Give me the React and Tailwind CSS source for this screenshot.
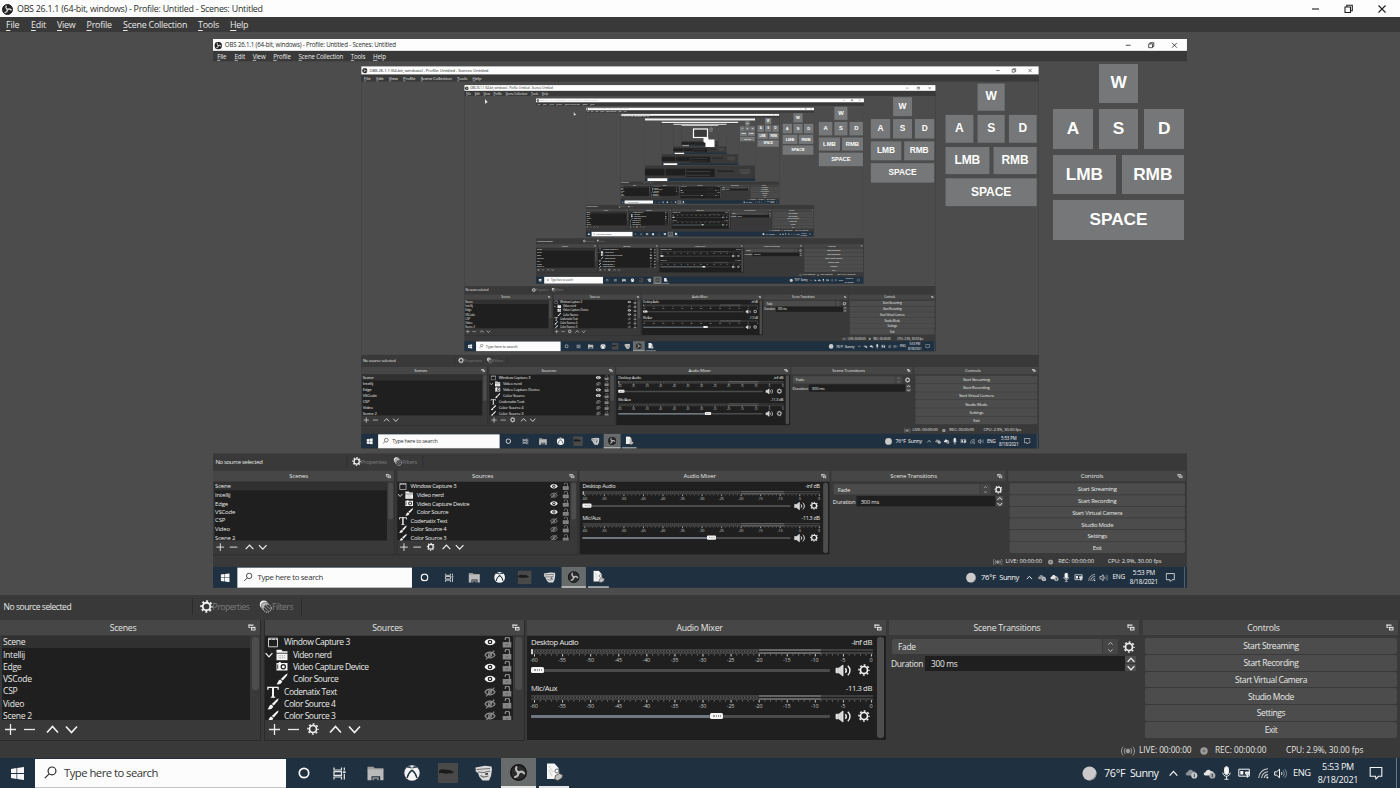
import React from "react";

const SCALE_X = 0.6957;
const SCALE_Y = 0.6965;
const DETAIL_DEPTH = 7;
const MAX_DEPTH = 10;

/* ---------- icons ---------- */

const Gear = ({ size = 12, className = "" }) => (
  <svg width={size} height={size} viewBox="0 0 12 12" className={"shrink-0 " + className} fill="none" stroke="#f2f3f2">
    <circle cx="6" cy="6" r="3.5" strokeWidth="1.7" />
    <circle cx="6" cy="6" r="5" strokeWidth="1.5" strokeDasharray="1.9 2.027" strokeDashoffset="0.95" />
  </svg>
);

const ObsLogo = ({ size = 11, ring = "#222322", blade = "#d8d8d8", bg = "#222322" }) => (
  <svg width={size} height={size} viewBox="0 0 24 24" className="shrink-0">
    <circle cx="12" cy="12" r="11" fill={bg} stroke={ring} strokeWidth="2" />
    <g fill="none" stroke={blade} strokeWidth="3" strokeLinecap="round">
      <path d="M9 4.5c-1.500 4 .5 6.500 3.800 6.800" />
      <path d="M9 4.5c-1.500 4 .5 6.500 3.800 6.800" transform="rotate(120 12 12)" />
      <path d="M9 4.5c-1.500 4 .5 6.500 3.800 6.800" transform="rotate(240 12 12)" />
    </g>
  </svg>
);

const Plus = () => (
  <svg width="13" height="13" viewBox="0 0 13 13" stroke="#e9eae9" strokeWidth="1.3"><path d="M6.500 1v11M1 6.500h11" /></svg>
);
const Minus = () => (
  <svg width="13" height="13" viewBox="0 0 13 13" stroke="#e9eae9" strokeWidth="1.3"><path d="M1 6.500h11" /></svg>
);
const Up = ({ w = 13, color = "#f2f3f2", sw = 1.6 }) => (
  <svg width={w} height={w} viewBox="0 0 13 13" fill="none" stroke={color} strokeWidth={sw}><path d="M1 9.500l5.500-6 5.500 6" /></svg>
);
const Down = ({ w = 13, color = "#f2f3f2", sw = 1.6 }) => (
  <svg width={w} height={w} viewBox="0 0 13 13" fill="none" stroke={color} strokeWidth={sw}><path d="M1 3.500l5.500 6 5.500-6" /></svg>
);

const Undock = () => (
  <svg width="8" height="7" viewBox="0 0 8 7">
    <path d="M.5.5h5v1.300h-5z" fill="#dededf" />
    <path d="M.5.5h1v3.500h-1zM1.500 3.200h1.300v.8H1.500z" fill="#dededf" />
    <path d="M3 2.800h4.500v3.700H3z" fill="#dededf" />
    <path d="M4 4.300h2.500v1.200H4z" fill="#454645" />
  </svg>
);

const Eye = ({ off }) =>
  off ? (
    <svg width="12" height="10" viewBox="0 0 12 10" fill="none" stroke="#8b8c8b" strokeWidth="1.2">
      <path d="M1 5c2.200-3.800 7.800-3.800 10 0-2.200 3.800-7.800 3.800-10 0z" />
      <circle cx="6" cy="5" r="1.500" />
      <path d="M2 9.300L10.300.7" />
    </svg>
  ) : (
    <svg width="12" height="10" viewBox="0 0 12 10">
      <path d="M.5 5c2.400-4.300 8.600-4.300 11 0-2.400 4.300-8.600 4.300-11 0z" fill="#f4f5f4" />
      <circle cx="6" cy="5" r="2.300" fill="#1e1f1e" />
      <circle cx="6" cy="5" r="1.100" fill="#f4f5f4" />
    </svg>
  );

const Lock = () => (
  <svg width="10" height="11" viewBox="0 0 10 11">
    <path d="M3.200 3V2.200a2 2 0 0 1 4.300 0V5" fill="none" stroke="#8b8c8b" strokeWidth="1.200" />
    <rect x=".7" y="5" width="8.600" height="5.500" fill="#848584" />
    <path d="M4.500 7h1v1.500h-1z" fill="#555655" />
  </svg>
);

const WindowIcon = () => (
  <svg width="12" height="11" viewBox="0 0 12 11" fill="none" stroke="#c9cac9">
    <path d="M1.500 1.200h9v8.600h-9z" />
    <path d="M1.500 2.400h9" strokeWidth="1.300" strokeDasharray="3 .6" />
  </svg>
);
const FolderIcon = () => (
  <svg width="12" height="12" viewBox="0 0 12 12">
    <path d="M.5.8h5l1 1.400h5v1.600H.5z" fill="#f4f5f4" />
    <path d="M.5 4.600h11v6.600H.5z" fill="#f4f5f4" />
    <path d="M2.500 6.800h7M2.500 8.800h7" stroke="#9a9b9a" strokeWidth="1" strokeDasharray="1 .8" />
  </svg>
);
const CameraIcon = () => (
  <svg width="12" height="11" viewBox="0 0 12 11">
    <path d="M.5 2h2.300v-.9h2V2h6.700v7.600H.5z" fill="#f4f5f4" />
    <circle cx="7.300" cy="5.800" r="2.700" fill="#1e1f1e" />
    <circle cx="7.300" cy="5.800" r="1.500" fill="#f4f5f4" />
    <path d="M1.700 3.500v4.500" stroke="#1e1f1e" strokeWidth=".8" />
  </svg>
);
const BrushIcon = () => (
  <svg width="12" height="12" viewBox="0 0 12 12" fill="#f4f5f4">
    <path d="M11.600.3L10.900 2.800 6.800 7.600 4.800 5.900 9.300 1.700z" />
    <path d="M4.200 6.500l2 1.700C5.700 10.700 3.200 11.700.5 11.300 2 10.300 1.900 7.300 4.200 6.500z" />
  </svg>
);
const TextIcon = () => (
  <svg width="12" height="12" viewBox="0 0 12 12" fill="none" stroke="#f4f5f4">
    <path d="M.9 3.800V1.300h10.200v2.500" strokeWidth="1.300" />
    <path d="M6 1v10" strokeWidth="2" />
    <path d="M3.800 11.200h4.400" strokeWidth="1.200" />
  </svg>
);

const Speaker = () => (
  <svg width="17" height="13" viewBox="0 0 17 13" fill="none" stroke="#f2f3f2">
    <path d="M1 4.200h2.800L8 1v11L3.800 8.800H1z" fill="#d4d5d4" strokeWidth=".8" />
    <path d="M10.300 4.200c1.200 1.300 1.200 3.300 0 4.600M12.800 1.800c2.900 2.600 2.900 6.800 0 9.400" strokeWidth="1.400" />
  </svg>
);

const FiltersIcon = () => (
  <svg width="13" height="13" viewBox="0 0 13 13" fill="none">
    <circle cx="4.800" cy="4.500" r="4" fill="#eeefee" />
    <circle cx="6.200" cy="6.200" r="4" fill="#b5b6b5" stroke="#5a5a5a" strokeWidth=".6" />
    <circle cx="8.200" cy="8.200" r="4" fill="#393939" stroke="#d8d9d8" strokeWidth="1" strokeDasharray="1.400 .7" />
    <path d="M4.500 6.200l4.500 4.500M6.500 4.800l4 4" stroke="#b5b6b5" strokeWidth=".8" />
  </svg>
);

/* ---------- preview ---------- */

const Key = ({ className, children }) => (
  <div className={"flex items-center justify-center bg-[#767778] pb-px " + className}>{children}</div>
);

const KeyOverlay = () => (
  <div className="absolute left-[1053px] top-[31.600px] grid h-[176.500px] w-[131px] grid-cols-6 grid-rows-4 gap-[6px] font-['Liberation_Sans',sans-serif] text-[17.300px] font-bold leading-none tracking-[-0.1px] text-[#fdfefd]">
    <Key className="col-span-2 col-start-3">W</Key>
    <Key className="col-span-2 col-start-1">A</Key>
    <Key className="col-span-2">S</Key>
    <Key className="col-span-2">D</Key>
    <Key className="col-span-3">LMB</Key>
    <Key className="col-span-3">RMB</Key>
    <Key className="col-span-6">SPACE</Key>
  </div>
);

/* Thumbnail of the window for the levels where lettering is below a pixel. */
const TinyScreen = ({ depth }) => (
  <svg width="1400" height="788" viewBox="0 0 1400 788">
    <path d="M0 0h1400v788H0z" fill="#393939" />
    <path d="M0 32h1400v563H0z" fill="#4b4c4b" />
    <path d="M2 636h248v84H2zM265 636h248v84H265zM527 636h359v104H527zM925 656h200v15H925z" fill="#1e1f1e" />
    <path d="M531 670h299M531 716h299M1200 646h140M1200 663h140M1200 680h140M1220 697h100" stroke="#6d6e6d" strokeWidth="5" />
    <path d="M0 758h1400v30H0z" fill="#1f3040" />
    <path d="M35 755h251v33H35z" fill="#fbfcfb" />
    <path d="M1099 64h39v39h-39zM1053 109h40v40h-40zM1099 109h39v40h-39zM1144 109h40v40h-40zM1053 155h63v40h-63zM1122 155h62v40h-62zM1053 201h131v39h-131z" fill="#767778" />
    <path d="M1062 129h22M1108 129h22M1153 129h22M1066 175h36M1134 175h36M1090 220h58M1108 84h22" stroke="#a9aaa9" strokeWidth="12" />
    {depth < MAX_DEPTH && (
      <g transform={`translate(213 39.400) scale(${SCALE_X} ${SCALE_Y})`}>
        <TinyScreen depth={depth + 1} />
      </g>
    )}
    <path d="M0 0h1400v28H0z" fill="#f0f1f0" />
  </svg>
);

const Preview = ({ depth }) => (
  <div className="relative h-[563px] shrink-0 overflow-hidden bg-[#4b4c4b]">
    <div
      className="absolute left-[213px] top-[7.400px] h-[788px] w-[1400px] origin-top-left"
      style={{ transform: `scale(${SCALE_X}, ${SCALE_Y})` }}
    >
      {depth < DETAIL_DEPTH - 1 ? <Screen depth={depth + 1} /> : <TinyScreen depth={depth + 1} />}
    </div>
    <KeyOverlay />
    {depth === 0 && (
      <>
        <svg className="absolute left-[692px] top-[95px]" width="25" height="22" viewBox="0 0 25 22">
          <rect x="1.500" y="2" width="14" height="8.500" fill="#3a3b3a" stroke="#fdfefd" strokeWidth="1.200" />
          <path d="M11.500 10.500h5v2h6v7.500h-9v-4l-2-1z" fill="#fdfefd" />
        </svg>
        <svg className="absolute left-[484px] top-[67px]" width="5" height="6" viewBox="0 0 5 6">
          <path d="M1 0l3 3.500H2.500L1 5z" fill="#e6e7e6" />
        </svg>
        <svg className="absolute left-[573px] top-[80px]" width="4" height="5" viewBox="0 0 5 6">
          <path d="M1 0l3 3.500H2.500L1 5z" fill="#d6d7d6" />
        </svg>
      </>
    )}
  </div>
);

/* ---------- docks ---------- */

const DockTitle = ({ children }) => (
  <div className="relative flex h-[15px] shrink-0 items-center justify-center bg-[#454645] pr-[14px] pt-px text-[8.700px] leading-none tracking-[-0.24px] text-[#e4e5e4]">
    {children}
    <span className="absolute right-[4px] top-[4px]">
      <Undock />
    </span>
  </div>
);

const SCENES = ["Scene", "Intellij", "Edge", "VSCode", "CSP", "Video", "Scene 2"];

const Scenes = () => (
  <div className="flex w-[261px] shrink-0 flex-col border-b border-r border-[#2a2b2a]">
    <DockTitle>Scenes</DockTitle>
    <div className="mt-px flex h-[84px] pl-[2px]">
      <div className="w-[248px] overflow-hidden bg-[#1e1f1e]">
        {SCENES.map((s, i) => (
          <div
            key={s}
            className={
              "flex h-[12.300px] items-center pl-px pt-[0.800px] text-[8.600px] leading-none tracking-[-0.28px] text-[#e8e9e8] " +
              (i === 0 ? "bg-[#2f302f]" : "")
            }
          >
            {s}
          </div>
        ))}
      </div>
      <div className="ml-[2px] mt-px h-[53px] w-[7px] rounded-[3px] bg-[#4c4d4c]" />
    </div>
    <div className="flex h-[18px] items-center pl-[4px]">
      <Plus />
      <span className="ml-[6px]"><Minus /></span>
      <span className="ml-[10px]"><Up /></span>
      <span className="ml-[6px]"><Down /></span>
    </div>
  </div>
);

const SOURCES = [
  { name: "Window Capture 3", icon: WindowIcon, indent: 0 },
  { name: "Video nerd", icon: FolderIcon, indent: 1, off: true, arrow: true },
  { name: "Video Capture Device", icon: CameraIcon, indent: 1 },
  { name: "Color Source", icon: BrushIcon, indent: 1 },
  { name: "Codenatix Text", icon: TextIcon, indent: 0, off: true },
  { name: "Color Source 4", icon: BrushIcon, indent: 0, off: true },
  { name: "Color Source 3", icon: BrushIcon, indent: 0, off: true },
];

const Sources = () => (
  <div className="ml-[3px] flex w-[261px] shrink-0 flex-col border-b border-x border-[#2a2b2a]">
    <DockTitle>Sources</DockTitle>
    <div className="mt-px flex h-[84px]">
      <div className="w-[248px] overflow-hidden bg-[#1e1f1e] text-[8.500px] leading-none tracking-[-0.46px] text-[#e8e9e8]">
        {SOURCES.map((s) => (
          <div key={s.name} className="flex h-[12.300px] items-center pt-[0.500px]">
            <span className={"flex shrink-0 items-center justify-end " + (s.indent ? "w-[23px]" : "w-[14px]")}>
              {s.arrow && (
                <span className="mr-[3px]">
                  <Down w={8} sw={2} />
                </span>
              )}
              <s.icon />
            </span>
            <span className="ml-[5px] flex-1 whitespace-nowrap pt-[0.500px]">{s.name}</span>
            <Eye off={s.off} />
            <span className="ml-[6px] mr-px"><Lock /></span>
          </div>
        ))}
      </div>
      <div className="ml-[2px] mt-px h-[53px] w-[7px] rounded-[3px] bg-[#4c4d4c]" />
    </div>
    <div className="flex h-[18px] items-center pl-[3px]">
      <Plus />
      <span className="ml-[6px]"><Minus /></span>
      <span className="ml-[7px]"><Gear size={12} /></span>
      <span className="ml-[10px]"><Up /></span>
      <span className="ml-[6px]"><Down /></span>
    </div>
  </div>
);

const DB = ["-60", "-55", "-50", "-45", "-40", "-35", "-30", "-25", "-20", "-15", "-10", "-5", "0"];

let minorTicks = "";
for (let i = 0; i <= 60; i++) {
  minorTicks += `M${(3.500 + i * 5.62).toFixed(2)} 5.200v1.300`;
}
let majorTicks = "";
for (let i = 0; i <= 12; i++) {
  majorTicks += `M${(3.500 + i * 28.08).toFixed(2)} 5.200v2.300`;
}

const Channel = ({ name, db, level, active }) => (
  <div className="h-[46px]">
    <div className="flex h-[11.500px] items-center justify-between pt-[0.500px] text-[7.700px] leading-none tracking-[-0.4px] text-[#e8e9e8]">
      <span>{name}</span>
      <span>{db}</span>
    </div>
    <svg width="342" height="8" viewBox="0 0 342 8" className="block">
      <path d="M0 1h342M0 4h342" stroke="#4a4b4a" strokeWidth="1.600" />
      <path d="M3 2.400h225" stroke="#646564" strokeWidth="1" strokeDasharray="1.500 1.500" />
      <path d="M228 1h62M228 4h62" stroke="#707170" strokeWidth="1.300" />
      <path d={minorTicks} stroke="#8d8e8d" strokeWidth=".8" />
      <path d={majorTicks} stroke="#c9cac9" strokeWidth="1" />
      {active && <path d="M1 .3v5" stroke="#f4f5f4" strokeWidth="1.600" />}
    </svg>
    <div className="flex h-[6px] w-[351px] -translate-x-[10px] justify-between text-[5.500px] leading-[6px] text-[#c4c5c4]">
      {DB.map((d) => (
        <span key={d} className="w-[14px] translate-x-[6px] text-center tracking-[-0.2px]">{d}</span>
      ))}
    </div>
    <div className="flex h-[15.500px] items-center">
      <div className="relative h-[3px] w-[299px] rounded-[1px] bg-[#4a4b4a]">
        <div className="h-[3px] rounded-[1px] bg-[#6f7881]" style={{ width: level }} />
        <div
          className="absolute top-[-1.500px] flex h-[6px] w-[13px] items-center justify-center rounded-[1.500px] bg-[#f2f3f2]"
          style={{ left: level }}
        >
          <div className="h-[2px] w-[8px] border-y border-dotted border-[#9a9b9a]" />
        </div>
      </div>
      <span className="ml-[5px]"><Speaker /></span>
      <span className="ml-[6px]"><Gear size={12} /></span>
    </div>
  </div>
);

const Mixer = () => (
  <div className="ml-[2px] flex w-[359px] shrink-0 flex-col">
    <DockTitle>Audio Mixer</DockTitle>
    <div className="mt-px flex h-[104px] bg-[#1e1f1e] pl-[4px]">
      <div className="w-[341px] shrink-0 pt-px">
        <Channel name="Desktop Audio" db="-inf dB" level={0} active />
        <Channel name="Mic/Aux" db="-11.3 dB" level={179} />
      </div>
      <div className="ml-[5px] mt-px h-[101px] w-[7px] rounded-[3px] bg-[#4c4d4c]" />
    </div>
  </div>
);

const Transitions = () => (
  <div className="ml-[3px] flex w-[250px] shrink-0 flex-col text-[8.400px] leading-none tracking-[-0.3px] text-[#e8e9e8]">
    <DockTitle>Scene Transitions</DockTitle>
    <div className="mt-[4px] flex h-[15px] items-center pl-[3px]">
      <div className="flex h-[15px] w-[210px] items-center rounded-l-[2px] bg-[#4a4b4a] pl-[6px] pt-px">Fade</div>
      <div className="ml-px flex h-[15px] w-[15px] flex-col items-center justify-center gap-[2px] rounded-r-[2px] bg-[#454645]">
        <Up w={5} color="#b9bab9" sw={2.5} />
        <Down w={5} color="#b9bab9" sw={2.5} />
      </div>
      <span className="ml-[5px]"><Gear size={12} /></span>
    </div>
    <div className="mt-[2px] flex h-[15px] items-center pl-[2px]">
      <span className="w-[34px] pt-px">Duration</span>
      <div className="flex h-[15px] w-[200px] items-center bg-[#1e1f1e] pl-[6px] pt-px">300 ms</div>
      <div className="flex flex-col gap-px">
        <span className="flex h-[7px] w-[11px] items-center justify-center rounded-[1px] bg-[#4c4d4c]"><Up w={8} sw={2.200} /></span>
        <span className="flex h-[7px] w-[11px] items-center justify-center rounded-[1px] bg-[#4c4d4c]"><Down w={8} sw={2.200} /></span>
      </div>
    </div>
  </div>
);

const CONTROLS = ["Start Streaming", "Start Recording", "Start Virtual Camera", "Studio Mode", "Settings", "Exit"];

const Controls = () => (
  <div className="ml-[4px] flex w-[255px] shrink-0 flex-col">
    <DockTitle>Controls</DockTitle>
    <div className="mt-[3px] flex h-[100px] flex-col gap-px pl-[2px] pr-px">
      {CONTROLS.map((c) => (
        <div
          key={c}
          className="flex flex-1 items-center justify-center rounded-[2px] bg-[#4b4c4b] pt-px text-[8.500px] leading-none tracking-[-0.4px] text-[#e8e9e8]"
        >
          {c}
        </div>
      ))}
    </div>
  </div>
);

/* ---------- status + taskbar ---------- */

const StatusBar = () => (
  <div className="flex h-[17px] shrink-0 items-center pl-[1121px] pt-[2px] text-[8.300px] leading-none tracking-[-0.06px] text-[#e4e5e4]">
    <svg width="14" height="10" viewBox="0 0 14 10" fill="none" stroke="#9b9c9b" strokeWidth="1">
      <circle cx="7" cy="5" r="1.900" fill="#9b9c9b" />
      <path d="M4.300 2c-1.500 1.800-1.500 4.200 0 6M9.700 2c1.500 1.800 1.500 4.200 0 6M2.200.6C-.1 3.200-.1 6.800 2.200 9.400M11.800.6c2.300 2.600 2.300 6.200 0 8.800" />
    </svg>
    <span className="ml-[4px] w-[61px] whitespace-nowrap">LIVE: 00:00:00</span>
    <svg width="8" height="8" viewBox="0 0 8 8">
      <circle cx="4" cy="4" r="3.700" fill="#9b9c9b" />
      <circle cx="4" cy="4" r="1.400" fill="#707170" />
    </svg>
    <span className="ml-[7px] w-[71px] whitespace-nowrap">REC: 00:00:00</span>
    <span className="whitespace-nowrap">CPU: 2.9%, 30.00 fps</span>
  </div>
);

const Slot = ({ w, children }) => (
  <div className="flex h-full shrink-0 items-center justify-center" style={{ width: w }}>
    {children}
  </div>
);

const Taskbar = () => (
  <div className="flex h-[30px] shrink-0 items-center bg-[#1f3040] text-[#f6f7f6]">
    <Slot w={35}>
      <svg width="13" height="13" viewBox="0 0 13 13" fill="#f6f7f6">
        <path d="M0 1.900L5.500 1.100v5H0zM6.200 1L13 0v6.100H6.200zM0 6.900h5.500v5L0 11.100zM6.200 6.900H13V13l-6.800-1z" />
      </svg>
    </Slot>
    <div className="flex h-[29px] w-[251px] shrink-0 items-center border-b border-[#c4c5c4] bg-[#fbfcfb] pl-[9px]">
      <svg width="13" height="13" viewBox="0 0 13 13" fill="none" stroke="#2b2c2b" strokeWidth="1.200">
        <circle cx="8" cy="4.900" r="3.900" />
        <path d="M5.200 7.800L.8 12.200" />
      </svg>
      <span className="ml-[7px] whitespace-nowrap text-[11.300px] leading-none tracking-[-0.53px] text-[#343534]">Type here to search</span>
    </div>
    <Slot w={35}>
      <svg width="12" height="12" viewBox="0 0 12 12"><circle cx="6" cy="6" r="4.700" fill="none" stroke="#f6f7f6" strokeWidth="1.700" /></svg>
    </Slot>
    <Slot w={36}>
      <svg width="13" height="13" viewBox="0 0 13 13" fill="none" stroke="#e6e7e6" strokeWidth="1.200">
        <path d="M1 .5v2.500h7.500V.5M1 4.700h7.500v3.600H1zM1 12.500V10h7.500v2.500M11.300.5v3M11.300 7v5.500" />
        <path d="M10 5.200h2.600" strokeWidth="1.800" />
      </svg>
    </Slot>
    <Slot w={37}>
      <svg width="17" height="15" viewBox="0 0 17 15">
        <path d="M.5.8h6l1.200 1.500h8.800v2H.5z" fill="#9d9e9d" />
        <path d="M.5 3.500h16v10.700h-3.300v-4H4.500v4h-4z" fill="#b9bab9" />
        <path d="M5.500 11.200h6.300v3H10v-1.500H7.300v1.500H5.500z" fill="#8d8e8d" />
      </svg>
    </Slot>
    <Slot w={36}>
      <svg width="16" height="16" viewBox="0 0 16 16">
        <circle cx="8" cy="8" r="7.700" fill="#f2f3f2" />
        <path d="M3.200 2.400C5 1.600 6.800 2.500 8 3.400c1.200-.9 3-1.800 4.800-1M8 5.200C5.500 7.200 3.800 9.800 3.200 13M8 5.200c2.500 2 4.200 4.600 4.800 7.800" fill="none" stroke="#1f3040" strokeWidth="1.500" />
        <path d="M6.200 2.600h3.600L8 4.300zM8 6.500c2 1.800 3.400 4 4 7.200H4c.6-3.200 2-5.400 4-7.200z" fill="#f2f3f2" />
      </svg>
    </Slot>
    <Slot w={36}>
      <svg width="20" height="20" viewBox="0 0 20 20">
        <rect width="20" height="20" rx="1" fill="#484948" />
        <path d="M1 7.500c2.500-1.500 4.500-1.500 7-.7 3-.3 6 .5 8.500 2.700-2 0-3 .3-3.500 1-2-.5-3.500-.2-5 .3C6 10.500 3 9.500 1 10.500z" fill="#1a1b1a" />
      </svg>
    </Slot>
    <Slot w={35}>
      <svg width="18" height="17" viewBox="0 0 18 17">
        <path d="M.5 2.500L10 .8l6.500.7.500 3-1 6.500-2 4.500H7.500L4.500 12 3 8 .8 6.500z" fill="#d9dad9" />
        <path d="M1.500 4.500L15 3.500M3 7l6 .5 6-1.500M5.500 10.500l3 1.500 5-1" fill="none" stroke="#6d6e6d" strokeWidth="1.200" />
        <path d="M10 8.500l3-.5v1.500l-2.500.5z" fill="#2b2c2b" />
      </svg>
    </Slot>
    <div className="flex h-full w-[35px] shrink-0 items-center justify-center border-b-2 border-[#e5e6e5] bg-[#686b6c]">
      <ObsLogo size={17} ring="#141514" bg="#2a2b2a" blade="#b9bab9" />
    </div>
    <div className="ml-[3px] flex h-full w-[30px] shrink-0 items-center justify-center border-b-2 border-[#e5e6e5]">
      <svg width="17" height="18" viewBox="0 0 17 18">
        <path d="M1 .5h7.500L12.500 5 14 16H1z" fill="#f4f5f4" />
        <path d="M3 3l4 6M3 7l3 6" stroke="#c4c5c4" strokeWidth=".9" />
        <circle cx="11" cy="8" r="2" fill="none" stroke="#6d6e6d" strokeWidth="1" />
        <path d="M9.500 12.500l4-2 3.300 1.500-.8 3-4 2.500-3.300-1z" fill="#bfc0bf" stroke="#3a3b3a" strokeWidth=".7" />
      </svg>
    </div>
    <div className="flex-1" />
    <svg width="15" height="15" viewBox="0 0 15 15" className="shrink-0">
      <circle cx="7.500" cy="7.500" r="7" fill="#c9cac9" />
      <path d="M14.300 6a7 7 0 0 1-9 8c4.500.3 8-2.500 9-8z" fill="#8d8e8d" />
    </svg>
    <span className="ml-[7px] w-[26px] whitespace-nowrap text-[10.800px] leading-none tracking-[-0.35px]">76°F</span>
    <span className="w-[35px] whitespace-nowrap text-[10.800px] leading-none tracking-[-0.55px]">Sunny</span>
    <Slot w={17}><Up w={9} sw={1.900} /></Slot>
    {[0, 1].map((i) => (
      <Slot w={18} key={i}>
        <svg width="13" height="11" viewBox="0 0 13 11">
          <path d="M2.500 7.500C.2 7.300.2 4.300 2.500 4.200 3 1.200 7 .8 8 3.300c2-.3 3 1 2.800 2.200v2z" fill={i ? "#e4e5e4" : "#8d9398"} />
          <circle cx="9.300" cy="7.500" r="3.100" fill={i ? "#a9aaa9" : "#c9cac9"} />
          <path d="M9.300 5.800v3.400" stroke="#1f3040" strokeWidth=".9" />
        </svg>
      </Slot>
    ))}
    <Slot w={17}>
      <svg width="9" height="14" viewBox="0 0 9 14" fill="none" stroke="#e4e5e4" strokeWidth="1">
        <rect x="2.500" y=".7" width="4" height="7.800" rx="2" fill="#f4f5f4" />
        <path d="M.8 6.500c0 5 7.400 5 7.400 0M4.500 10.200v3M2.500 13.300h4" />
      </svg>
    </Slot>
    <Slot w={19}>
      <svg width="13" height="10" viewBox="0 0 13 10" fill="none" stroke="#f4f5f4" strokeWidth="1">
        <path d="M.8 1.200h10.500v7H.8z" />
        <path d="M2.300 3h3v3.500h-3z" fill="#f4f5f4" stroke="none" />
        <path d="M7.500 4h3.600v1.800l-1.800 1.400-1.800-1.400zM9.300 7v2.800" fill="#d8d9d8" />
      </svg>
    </Slot>
    <Slot w={18}>
      <svg width="11" height="11" viewBox="0 0 11 11" fill="none" stroke="#c9cac9" strokeWidth="1.100">
        <path d="M.7 10A9.500 9.500 0 0 1 10 .8M3.600 10A6.500 6.500 0 0 1 10 3.800M6.300 10A3.800 3.800 0 0 1 10 6.600" />
        <circle cx="9.300" cy="9.500" r="1" fill="#f4f5f4" stroke="none" />
      </svg>
    </Slot>
    <Slot w={16}>
      <svg width="13" height="11" viewBox="0 0 13 11" fill="none" stroke="#f4f5f4" strokeWidth="1">
        <path d="M.7 3.800h2L5.500 1.200v8.600L2.700 7.200h-2z" />
        <path d="M7.300 4c.8.900.8 2.100 0 3" />
        <path d="M9 2.500c1.700 1.800 1.700 4.200 0 6M10.700 1.200c2.400 2.600 2.400 6 0 8.600" stroke="#8d9398" />
      </svg>
    </Slot>
    <span className="ml-[5px] w-[23px] whitespace-nowrap text-[9.300px] leading-none tracking-[-0.4px]">ENG</span>
    <div className="flex w-[44px] shrink-0 flex-col items-center gap-px whitespace-nowrap text-[9px] leading-[12px] tracking-[-0.25px]">
      <span>5:53 PM</span>
      <span>8/18/2021</span>
    </div>
    <Slot w={32}>
      <svg width="14" height="14" viewBox="0 0 14 14" fill="none" stroke="#f4f5f4" strokeWidth="1.100">
        <path d="M1.200 1.500h11.600v8.800H9.500L7 12.800 6.500 10.300H1.200z" />
      </svg>
    </Slot>
    <div className="ml-[4px] mr-[3px] h-full w-px bg-[#6d7780]" />
  </div>
);

/* ---------- window ---------- */

const MENU = [
  ["File", "w-[25px]"],
  ["Edit", "w-[26px]"],
  ["View", "w-[29.500px]"],
  ["Profile", "w-[36.500px]"],
  ["Scene Collection", "w-[75px]"],
  ["Tools", "w-[32px]"],
  ["Help", "w-[30px]"],
];

function Screen({ depth }) {
  return (
    <div className="flex h-[788px] w-[1400px] flex-col overflow-hidden bg-[#393939] font-['Open_Sans','Noto_Sans',sans-serif]">
      <div className={"flex h-[17px] shrink-0 items-center bg-[#fcfdfc] pl-[2px] pt-px " + (depth > 3 ? "text-[#a9aaa9]" : "text-[#2b2c2b]")}>
        <ObsLogo />
        <span className="ml-[4px] flex-1 whitespace-nowrap text-[8.900px] leading-none tracking-[-0.26px]">
          OBS 26.1.1 (64-bit, windows) - Profile: Untitled - Scenes: Untitled
        </span>
        <svg width="80" height="10" viewBox="0 0 80 10" className="mb-px mr-[12px]" fill="none" stroke="#1e1f1e" strokeWidth="1.100">
          <path d="M4 5h7" />
          <path d="M37 3h5.500v5.500H37zM38.800 3V1.300h5.500v5.500h-1.800" />
          <path d="M70.500 1.500l7 7M77.500 1.500l-7 7" />
        </svg>
      </div>
      <div className="flex h-[15px] shrink-0 items-center pl-[6px] pt-px text-[8.900px] leading-none tracking-[-0.22px] text-[#e8e9e8]">
        {MENU.map(([m, w]) => (
          <span key={m} className={"whitespace-nowrap " + w}>
            <span className="underline underline-offset-[1.500px]">{m[0]}</span>
            {m.slice(1)}
          </span>
        ))}
      </div>
      <Preview depth={depth} />
      <div className="flex h-[25px] shrink-0 items-center pb-[2px] pl-[3.500px] text-[8.500px] leading-none tracking-[-0.43px] text-[#e8e9e8]">
        <span className="w-[188px] whitespace-nowrap pt-px">No source selected</span>
        <div className="h-[17px] w-px bg-[#2a2b2a]" />
        <span className="ml-[7px]"><Gear size={13} /></span>
        <span className="w-[46.500px] pt-px text-[#7d7e7d]">Properties</span>
        <FiltersIcon />
        <span className="w-[29px] pt-px text-[#7d7e7d]">Filters</span>
        <div className="h-[17px] w-px bg-[#2a2b2a]" />
      </div>
      <div className="flex h-[121px] shrink-0">
        <Scenes />
        <Sources />
        <Mixer />
        <Transitions />
        <Controls />
      </div>
      <StatusBar />
      <Taskbar />
    </div>
  );
}

export default function App() {
  return <Screen depth={0} />;
}
